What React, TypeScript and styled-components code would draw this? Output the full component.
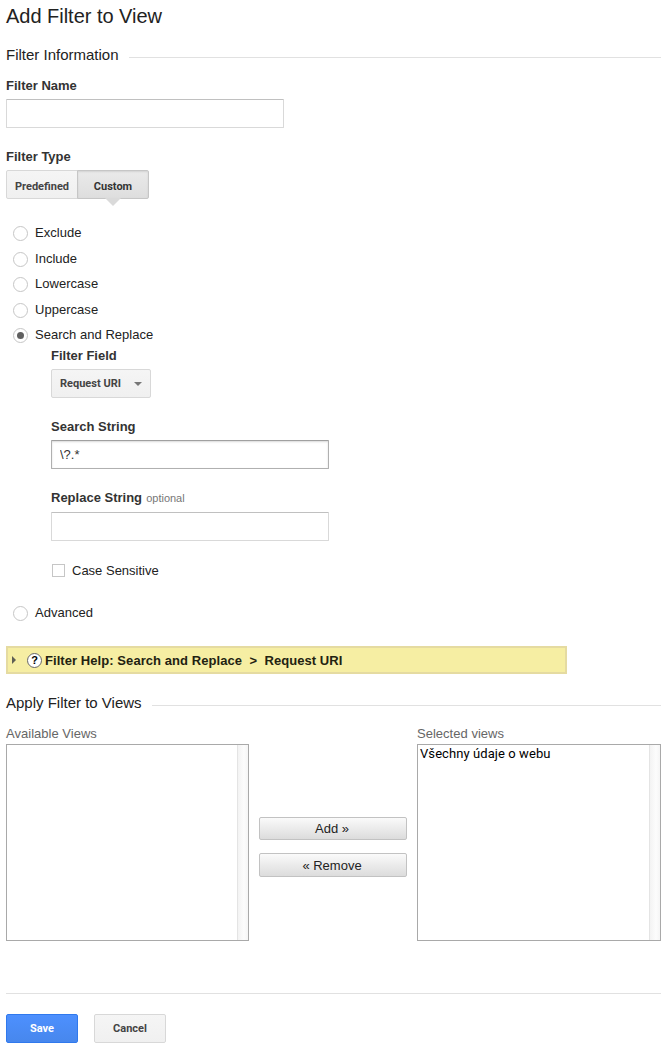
import React, { useState } from "react";
import styled, { createGlobalStyle, css } from "styled-components";

const GlobalStyle = createGlobalStyle`
  *, *::before, *::after { box-sizing: border-box; }
  body {
    margin: 0;
    background: #fff;
    color: #222;
    font: 13px/16px "Liberation Sans", Arial, sans-serif;
  }
`;

const Page = styled.main`
  width: 661px;
  height: 1059px;
  padding: 4px 0 0 6px;
`;

const Title = styled.h1`
  margin: 0;
  font-size: 20px;
  line-height: 24px;
  font-weight: 400;
  letter-spacing: -0.02px;
`;

const SectionHeading = styled.h2<{ $top: number }>`
  display: flex;
  align-items: center;
  gap: 10px;
  margin: ${(p) => p.$top}px 0 0;
  font-size: 15px;
  line-height: 20px;
  font-weight: 400;
  white-space: nowrap;
  &::after {
    content: "";
    flex: 1;
    height: 1px;
    margin-top: 5px;
    background: #e1e1e1;
  }
`;

const Field = styled.div<{ $top: number }>`
  margin-top: ${(p) => p.$top}px;
`;

const Label = styled.label<{ $gap?: number }>`
  display: block;
  height: 16px;
  margin-bottom: ${(p) => p.$gap ?? 5}px;
  font-weight: 700;
  color: #333;
`;

const Optional = styled.span`
  margin-left: 0.5px;
  font-size: 11px;
  font-weight: 400;
  color: #777;
`;

const TextInput = styled.input<{ $active?: boolean }>`
  display: block;
  width: 278px;
  height: 29px;
  padding: 0 8px;
  border: 1px solid ${(p) => (p.$active ? "#b0b0b0" : "#d9d9d9")};
  border-top-color: ${(p) => (p.$active ? "#a0a0a0" : "#c0c0c0")};
  border-radius: 1px;
  outline: none;
  font: 13px "Liberation Sans", Arial, sans-serif;
  color: #333;
  ${(p) => p.$active && css`box-shadow: inset 0 1px 2px rgba(0, 0, 0, 0.15);`}
`;

const buttonFace = css`
  height: 29px;
  padding: 3px 0 0;
  border: 1px solid #d8d8d8;
  border-radius: 2px;
  background: linear-gradient(#f5f5f5, #f0f0f0);
  font: 700 11px Roboto, sans-serif;
  color: #444;
`;

const Tabs = styled.div`
  display: flex;
`;

const Tab = styled.button<{ $selected?: boolean }>`
  ${buttonFace}
  position: relative;
  width: 72px;
  border-radius: 2px 0 0 2px;
  ${(p) =>
    p.$selected &&
    css`
      margin-left: -1px;
      border-color: #c6c6c6;
      border-radius: 0 2px 2px 0;
      background: linear-gradient(#eaeaea, #dedede);
      box-shadow: inset 0 1px 2px rgba(0, 0, 0, 0.1);
      color: #333;
      &::after {
        content: "";
        position: absolute;
        top: 27px;
        left: 27px;
        border: solid transparent;
        border-width: 8px 8px 0;
        border-top-color: #dadada;
      }
    `}
`;

const RadioList = styled.div`
  display: grid;
  grid-template-rows: 26px 25px 26px 25px 18px;
  margin: 26px 0 0 7px;
`;

const AdvancedRow = styled.div`
  margin: 26px 0 0 7px;
`;

const RadioRow = styled.label`
  display: flex;
  gap: 7px;
  height: 18px;
  letter-spacing: 0.03px;
`;

const RadioMark = styled.span<{ $checked?: boolean }>`
  display: grid;
  place-items: center;
  width: 15px;
  height: 15px;
  margin-top: 1px;
  border: 1px solid #c6c6c6;
  border-radius: 50%;
  &::after {
    content: "";
    width: 7px;
    height: 7px;
    border-radius: 50%;
    background: ${(p) => (p.$checked ? "#606060" : "transparent")};
  }
`;

const Details = styled.div`
  padding-left: 45px;
`;

const SelectButton = styled.button`
  ${buttonFace}
  display: flex;
  align-items: center;
  justify-content: space-between;
  width: 100px;
  padding: 0 8px;
  &::after {
    content: "";
    border: solid transparent;
    border-width: 4px 4px 0;
    border-top-color: #777;
  }
`;

const CheckRow = styled.label`
  display: flex;
  gap: 7px;
  margin: 22px 0 0 1px;
`;

const CheckMark = styled.span`
  width: 13px;
  height: 13px;
  margin-top: 1px;
  border: 1px solid #c6c6c6;
`;

const HelpBar = styled.div`
  display: flex;
  align-items: center;
  width: 561px;
  height: 28px;
  margin-top: 23px;
  padding-left: 4px;
  border: 2px solid #e5dba1;
  background: #f6eea3;
  font-weight: 700;
  color: #222211;
`;

const HelpText = styled.span`
  padding-top: 2px;
  letter-spacing: 0.065px;
  white-space: pre;
`;

const Disclosure = styled.span`
  margin-right: 11px;
  border: solid transparent;
  border-width: 4px 0 4px 4px;
  border-left-color: #5f5f55;
`;

const HelpIcon = styled.span`
  width: 15px;
  height: 15px;
  margin-right: 3px;
  border: 1px solid #666;
  border-radius: 50%;
  background: #fff;
  font-size: 11px;
  line-height: 13px;
  text-align: center;
  color: #000;
`;

const Picker = styled.div`
  display: grid;
  grid-template-columns: 243px 148px 244px;
  gap: 10px;
  margin-top: 13px;
`;

const PickerLabel = styled.div`
  height: 18px;
  color: #666;
  letter-spacing: 0.02px;
`;

const ListBox = styled.div`
  display: flex;
  justify-content: space-between;
  height: 197px;
  border: 1px solid #a9a9a9;
  background: #fff;
  font: 13px/18px Roboto, sans-serif;
  letter-spacing: 0.08px;
  color: #000;
  &::after {
    content: "";
    width: 11px;
    border-left: 1px solid #e4e4e4;
    background: linear-gradient(90deg, #f3f3f3, #fcfcfc 60%, #f5f5f5);
  }
`;

const Option = styled.div`
  padding-left: 2px;
`;

const MoveButtons = styled.div`
  display: flex;
  flex-direction: column;
  gap: 13px;
  padding-top: 91px;
`;

const MoveButton = styled.button<{ $height: number }>`
  height: ${(p) => p.$height}px;
  padding: 0 2px 0 0;
  border: 1px solid #c2c2c2;
  border-radius: 2px;
  background: linear-gradient(#fafafa, #dcdcdc);
  font: 13px "Liberation Sans", Arial, sans-serif;
  color: #222;
`;

const Footer = styled.footer`
  display: flex;
  gap: 16px;
  margin-top: 52px;
  padding-top: 20px;
  border-top: 1px solid #e1e1e1;
`;

const ActionButton = styled.button<{ $primary?: boolean }>`
  ${buttonFace}
  width: 72px;
  padding-top: 0;
  ${(p) =>
    p.$primary &&
    css`
      border-color: #3079ed;
      background: linear-gradient(#4d90fe, #4787ed);
      color: #fff;
    `}
`;

const simpleTypes = ["Exclude", "Include", "Lowercase", "Uppercase", "Search and Replace"];

export default function App() {
  const [type, setType] = useState("Search and Replace");
  const radio = (name: string) => (
    <RadioRow key={name} onClick={() => setType(name)}>
      <RadioMark $checked={type === name} />
      {name}
    </RadioRow>
  );

  return (
    <>
      <GlobalStyle />
      <Page>
        <Title>Add Filter to View</Title>
        <SectionHeading $top={17}>Filter Information</SectionHeading>
        <Field $top={13}>
          <Label>Filter Name</Label>
          <TextInput />
        </Field>
        <Field $top={21}>
          <Label>Filter Type</Label>
          <Tabs>
            <Tab>Predefined</Tab>
            <Tab $selected>Custom</Tab>
          </Tabs>
        </Field>
        <RadioList>{simpleTypes.map(radio)}</RadioList>
        <Details>
          <Field $top={3}>
            <Label>Filter Field</Label>
            <SelectButton>Request URI</SelectButton>
          </Field>
          <Field $top={21}>
            <Label>Search String</Label>
            <TextInput $active defaultValue="\?.*" />
          </Field>
          <Field $top={21}>
            <Label $gap={6}>
              Replace String <Optional>optional</Optional>
            </Label>
            <TextInput />
          </Field>
          <CheckRow>
            <CheckMark />
            Case Sensitive
          </CheckRow>
        </Details>
        <AdvancedRow>{radio("Advanced")}</AdvancedRow>
        <HelpBar>
          <Disclosure />
          <HelpIcon>?</HelpIcon>
          <HelpText>{"Filter Help: Search and Replace  >  Request URI"}</HelpText>
        </HelpBar>
        <SectionHeading $top={19}>Apply Filter to Views</SectionHeading>
        <Picker>
          <div>
            <PickerLabel>Available Views</PickerLabel>
            <ListBox>
              <Option />
            </ListBox>
          </div>
          <MoveButtons>
            <MoveButton $height={23}>Add »</MoveButton>
            <MoveButton $height={24}>« Remove</MoveButton>
          </MoveButtons>
          <div>
            <PickerLabel>Selected views</PickerLabel>
            <ListBox>
              <Option>Všechny údaje o webu</Option>
            </ListBox>
          </div>
        </Picker>
        <Footer>
          <ActionButton $primary>Save</ActionButton>
          <ActionButton>Cancel</ActionButton>
        </Footer>
      </Page>
    </>
  );
}
